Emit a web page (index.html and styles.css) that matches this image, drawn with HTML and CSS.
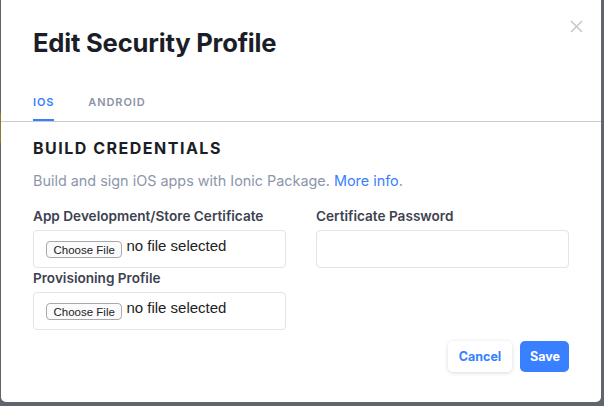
FILE: index.html
```html
<!DOCTYPE html>
<html lang="en">
<head>
<meta charset="utf-8">
<title>Edit Security Profile</title>
<link rel="stylesheet" href="styles.css">
</head>
<body>
<div class="backdrop-strip"></div>
<div class="modal">
  <button class="close" aria-label="Close">
    <svg width="13" height="13" viewBox="0 0 13 13"><path d="M1 1L12 12M12 1L1 12" stroke="#c4c6ca" stroke-width="1.5" fill="none"/></svg>
  </button>
  <h1 class="title">Edit Security Profile</h1>
  <div class="tabs">
    <div class="tab active">IOS</div>
    <div class="tab">ANDROID</div>
  </div>
  <div class="content">
    <h2 class="section">BUILD CREDENTIALS</h2>
    <p class="desc">Build and sign iOS apps with Ionic Package. <a class="link" href="#">More info</a>.</p>
    <div class="grid">
      <div class="field">
        <label class="label">App Development/Store Certificate</label>
        <div class="box"><span class="filebtn">Choose File</span><span class="filetext">no file selected</span></div>
      </div>
      <div class="field">
        <label class="label">Certificate Password</label>
        <div class="box"></div>
      </div>
      <div class="field">
        <label class="label">Provisioning Profile</label>
        <div class="box"><span class="filebtn">Choose File</span><span class="filetext">no file selected</span></div>
      </div>
    </div>
    <div class="actions">
      <button class="btn cancel">Cancel</button>
      <button class="btn save">Save</button>
    </div>
  </div>
</div>
</body>
</html>
```
FILE: styles.css
```css
html, body {
  margin: 0;
  padding: 0;
}
body {
  width: 604px;
  height: 406px;
  background: #5f646e;
  font-family: Inter, "Noto Sans", sans-serif;
  overflow: hidden;
  position: relative;
}
.backdrop-strip {
  position: absolute;
  left: 0;
  top: 113px;
  width: 1px;
  height: 30px;
  background: #8a7a3a;
}
.modal {
  position: relative;
  margin-left: 1px;
  width: 600px;
  height: 402px;
  background: #fff;
  border-radius: 0 0 5px 5px;
}
.close {
  position: absolute;
  top: 20px;
  right: 18px;
  padding: 0;
  border: 0;
  background: none;
  width: 13px;
  height: 13px;
  line-height: 0;
}
.title {
  margin: 0;
  padding: 27px 0 0 32px;
  font-size: 25.6px;
  line-height: 32px;
  font-weight: 700;
  color: #1b1e27;
  letter-spacing: -0.2px;
}
.tabs {
  display: flex;
  gap: 34px;
  margin-top: 36px;
  padding-left: 32px;
  border-bottom: 1px solid #c7cad0;
}
.tab {
  font-size: 11px;
  font-weight: 600;
  letter-spacing: 0.9px;
  color: #8b94a6;
  line-height: 14px;
  padding-bottom: 10px;
  border-bottom: 2px solid transparent;
}
.tab.active {
  color: #3880ff;
  border-bottom-color: #3880ff;
}
.content {
  padding: 0 32px 0 32px;
}
.section {
  margin: 16px 0 0;
  font-size: 16px;
  line-height: 20px;
  font-weight: 700;
  letter-spacing: 1.5px;
  color: #1b1e27;
}
.desc {
  margin: 13px 0 0;
  font-size: 14.4px;
  line-height: 20px;
  color: #8c96aa;
}
.link {
  color: #3880ff;
  text-decoration: none;
}
.grid {
  display: grid;
  grid-template-columns: 253px 253px;
  column-gap: 30px;
  row-gap: 2px;
  margin-top: 17px;
}
.field {
  display: flex;
  flex-direction: column;
}
.label {
  font-size: 13.6px;
  line-height: 16px;
  font-weight: 600;
  color: #3d4250;
  margin-bottom: 6px;
}
.box {
  box-sizing: border-box;
  height: 38px;
  border: 1px solid #dfe3ea;
  border-radius: 4px;
  display: flex;
  align-items: flex-start;
  padding: 8px 0 0 12px;
}
.filebtn {
  box-sizing: border-box;
  font-family: "Liberation Sans", Arial, sans-serif;
  font-size: 11.5px;
  line-height: 14px;
  padding: 1px 6.5px 1px;
  margin-top: 2px;
  border: 1px solid #a9a9a9;
  border-radius: 4px;
  background: #fbfbfb;
  color: #222;
  height: 17px;
}
.filetext {
  font-family: "Liberation Sans", Arial, sans-serif;
  font-size: 15px;
  line-height: 16px;
  color: #222;
  margin-left: 4px;
  margin-top: -1px;
}
.actions {
  display: flex;
  justify-content: flex-end;
  gap: 8px;
  margin-top: 11px;
}
.btn {
  font-family: Inter, "Noto Sans", sans-serif;
  font-size: 12.5px;
  font-weight: 700;
  height: 31px;
  border: 0;
  border-radius: 5px;
  padding: 0 10px;
  cursor: pointer;
}
.cancel {
  width: 64px;
  background: #fff;
  color: #3880ff;
  box-shadow: 0 1px 4px rgba(40, 50, 70, 0.18);
}
.save {
  width: 49px;
  background: #3880ff;
  color: #fff;
}
```
